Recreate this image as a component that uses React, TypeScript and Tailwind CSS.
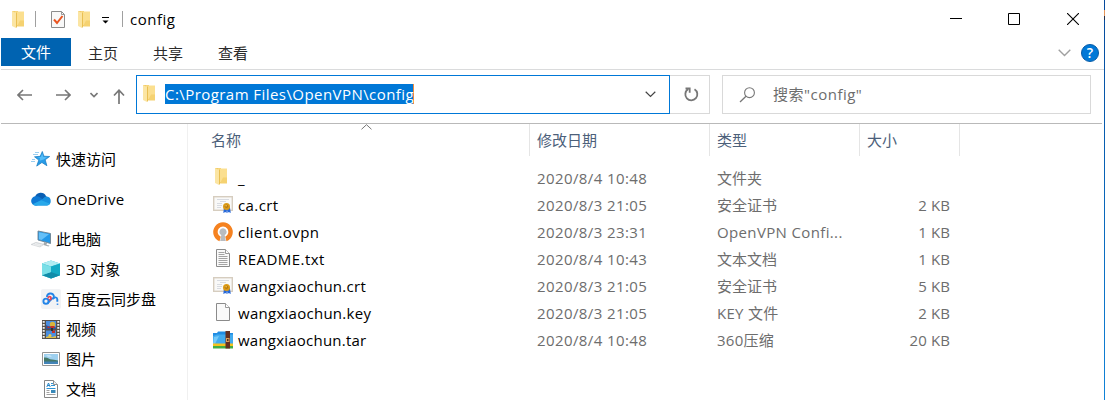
import React from "react";

type FileRow = {
  name: string;
  nameClass: string;
  icon: React.ReactNode;
  date: string;
  kind: string;
  kindClass: string;
  size: string;
};

function Folder({ className = "" }: { className?: string }) {
  return (
    <svg width="12" height="17" viewBox="0 0 12 17" className={"shrink-0 " + className}>
      <path d="M0 0h6v15H0z" fill="#f2cc68" />
      <path d="M3 .5h9v13.500H3z" fill="#fbdf8f" />
      <path d="M8 9.500h4V15.500H5z" fill="#f5d271" />
      <path d="M0 0l4 2v15l-4-2z" fill="#fbe5a3" />
      <path d="M4 2l1-1v15l-1 1z" fill="#e9bf52" />
    </svg>
  );
}

function Certificate() {
  return (
    <svg width="20" height="19" viewBox="0 0 20 19">
      <rect x=".7" y="1.700" width="18.600" height="13.600" fill="#f9f9f8" stroke="#d6cdbf" strokeWidth="1.400" />
      <path d="M4 4.500h12M7 6.500h6M4 8.500h5M4 10.500h5M4 12.500h4" stroke="#cfd3da" strokeWidth=".8" />
      <path d="M11 12l-.7 6 2-1 1.300 1 .4-4 .5 4 1.300-1 2 1-.9-6z" fill="#2668d8" />
      <circle cx="13.500" cy="11.500" r="3.500" fill="#dc9b16" />
      <circle cx="13.500" cy="11.300" r="1.700" fill="#b57812" />
      <circle cx="13.100" cy="10.800" r=".8" fill="#f7cd55" />
    </svg>
  );
}

function OpenVpn() {
  return (
    <svg width="20" height="20" viewBox="0 0 20 20">
      <path d="M6.500 19.200A9.800 9.800 0 1 1 13.500 19.200L12.200 14.700A5.300 5.300 0 1 0 7.800 14.700z" fill="#f58220" />
      <path d="M10 6.300a3.500 3.500 0 0 0-1.700 6.600L7.200 19h5.600l-1.100-6.100A3.500 3.500 0 0 0 10 6.300z" fill="#b9bcc0" />
    </svg>
  );
}

function Page({ lines = false }: { lines?: boolean }) {
  return (
    <svg width="16" height="19" viewBox="0 0 16 19">
      <path d="M1.500.5h9l4 4v13h-13z" fill="#fafafa" stroke="#8b8b8b" />
      <path d="M10.500.5v4h4" fill="#fff" stroke="#9a9a9a" />
      {lines && <path d="M3.500 3.500h6M3.500 5.500h6M3.500 7.500h9M3.500 9.500h9M3.500 11.500h9M3.500 13.500h9M3.500 15.500h9" stroke="#a4a4a4" />}
    </svg>
  );
}

function Archive() {
  return (
    <svg width="20" height="18" viewBox="0 0 20 18">
      <path d="M0 2h4l1-1.500h9L15 2h5v11H0z" fill="#218de3" />
      <path d="M0 5l4-1.500h16V13H0z" fill="#42abef" />
      <path d="M1 6l5-1-4 8H0z" fill="#74cafa" />
      <path d="M0 12.500h20V15H0z" fill="#f6c11d" />
      <path d="M0 15h20v2.500H0z" fill="#43ad45" />
      <path d="M12.500 0h4.500v17.500h-4.500z" fill="#632f21" />
      <path d="M13 7h3.500v4H13z" fill="#dfa15c" />
      <path d="M14 8h1.500v2H14z" fill="#56301f" />
    </svg>
  );
}

function Star() {
  return (
    <svg width="20" height="16" viewBox="0 0 20 16">
      <path d="M11.300.5l1.600 4.700 5.800.3-4.500 3.300 1.700 5.900-5-3.200-5.200 3.600 2.100-6L3.500 5.800l5.700-.5z" fill="#279ce8" stroke="#1478bf" strokeWidth=".7" />
      <path d="M11.200 2.300l1.100 3.700 3.900.3-3.600 2.200-4 1.200L9 7 6 6.300l3.900-.4z" fill="#55bdf8" />
      <path d="M4 1.500h4M2 3.500h5M1 8.500h3M0 10.500h4" stroke="#8fc8ee" strokeWidth=".9" />
    </svg>
  );
}

function OneDrive() {
  return (
    <svg width="20" height="14" viewBox="0 0 20 14">
      <path d="M4 5A6 6 0 0 1 15 4l2 3-8 3z" fill="#0a5fb4" />
      <path d="M5 4.300a4.600 4.600 0 0 1 3.500.8L14 9l-8 4.500H4.500A4.600 4.600 0 1 1 5 4.300z" fill="#0f78d4" />
      <path d="M14 4.700a4 4 0 0 1 1.800-.1A4.500 4.500 0 0 1 16 13.500H4.500L2 12.800 11.500 7z" fill="#1890df" />
      <path d="M1.500 12.200L10.300 8.200l8.700 3.500a4 4 0 0 1-3 1.800H4.500a4.700 4.700 0 0 1-3-1.300z" fill="#28a8ea" />
    </svg>
  );
}

function Computer() {
  return (
    <svg width="20" height="18" viewBox="0 0 20 18">
      <path d="M7 1l12.500 2.500v10L7 10z" fill="#2498e8" stroke="#6f8290" strokeWidth=".9" />
      <path d="M8 2.200l10 2-7.500 5.800-2.500-.8z" fill="#65c0f8" />
      <path d="M13 12l3 1-.5 2 3 .5-1 1-5-1.500z" fill="#a3a9ad" />
      <path d="M0 14.500l5-2.200 8 2L9 17z" fill="#dcdfe1" stroke="#c2c7cb" strokeWidth=".5" />
      <path d="M2 14.500l7 1.500M4 13.500l7 1.500" stroke="#fff" strokeWidth=".5" />
    </svg>
  );
}

function Cube() {
  return (
    <svg width="20" height="19" viewBox="0 0 20 19">
      <path d="M1 3.500L10 .5l9 3v11.800L10 18.500 1 15.300z" fill="#31c1d4" />
      <path d="M1 3.500L10 .5l9 3-9 3z" fill="#b1edf2" />
      <path d="M1 3.500l9 3v12L1 15.300z" fill="#69d6e0" />
      <path d="M10 6.500l9-3v11.800l-9 3.200z" fill="#13aac4" />
      <path d="M1 15.300l9-3.300v6.500zM19 15.300L10 12v6.500z" fill="#118ca9" />
      <path d="M1 4l9 3v5l-9 3z" fill="#79dfe7" />
    </svg>
  );
}

function CloudSync() {
  return (
    <svg width="20" height="20" viewBox="0 0 20 20">
      <rect width="20" height="20" rx="2" fill="#f2f3f5" />
      <circle cx="5" cy="12.200" r="2.600" fill="none" stroke="#2485e8" strokeWidth="1.900" />
      <path d="M6.800 13.800l5-5" stroke="#2485e8" strokeWidth="1.900" />
      <path d="M6 8a3.500 3.500 0 0 1 6.800-1.200c.5 1.600 0 2.500-1 3.200" fill="none" stroke="#2485e8" strokeWidth="1.900" />
      <path d="M7 9.500c0-2.200 3-2.500 3-.4 0 1.200-1 1.900-2 1.900" fill="none" stroke="#e84455" strokeWidth="1.700" />
      <path d="M12.300 9.500c.8-1.700 4-1.500 4 .8v2.400" fill="none" stroke="#2485e8" strokeWidth="1.900" />
      <path d="M15.700 14.500h1.600V16h-1.600z" fill="#3d92ec" />
    </svg>
  );
}

function Film() {
  return (
    <svg width="18" height="19" viewBox="0 0 18 19">
      <path d="M0 0h18v19H0z" fill="#55504b" />
      <path d="M1.700 1v18M16.300 1v18" stroke="#f1f1f1" strokeWidth="2" strokeDasharray="1.700 1.300" />
      <path d="M4 1h10v8H4zM4 10.500h10V18H4z" fill="#4a8ee0" />
      <path d="M4 5l3 1.500 2-1 5 2V9H4z" fill="#30549b" />
      <circle cx="10.500" cy="4.500" r="2.700" fill="#d8b43c" />
      <path d="M8.500 6h4v2h-4zM5.500 6.500h2V8h-2zM10 10.500h3V13h-3z" fill="#c72f26" />
      <circle cx="8" cy="15.500" r="1.500" fill="#edc846" />
      <path d="M4 17l3-1 3 1 4-1v2H4z" fill="#e2c046" />
      <path d="M9 8h2v3H9z" fill="#2f3030" />
    </svg>
  );
}

function Picture() {
  return (
    <svg width="18" height="14" viewBox="0 0 18 14">
      <path d="M.5.5h17v13H.5z" fill="#fff" stroke="#949494" />
      <path d="M2 2h14v10H2z" fill="#9ed0ef" />
      <path d="M2 5.500c4-.5 5 2 8 2s4 1 6 1v1.500H2z" fill="#447767" />
      <path d="M2 9.500h14V12H2z" fill="#4384b8" />
      <path d="M4 3.500h4l2 1H6z" fill="#e4f4fc" />
    </svg>
  );
}

function Doc() {
  return (
    <svg width="16" height="19" viewBox="0 0 16 19">
      <path d="M1.500.5h9l4 4v13h-13z" fill="#fff" stroke="#858585" />
      <path d="M10.500.5v4h4" fill="#eee" stroke="#929292" />
      <path d="M3.800 7l1.700-4 1.700 4M4.500 5.500h2" fill="none" stroke="#2384c8" />
      <path d="M8 3.500h2M8 5.500h4M3.500 8.500h9" stroke="#2f94d4" />
      <path d="M3.500 10.500h3M3.500 12.500h3M3.500 14.500h9" stroke="#a0a0a0" />
      <path d="M8 10h4.500v3H8z" fill="#3889b9" />
    </svg>
  );
}

const files: FileRow[] = [
  { name: "_", nameClass: "", icon: <Folder className="-ml-1 -mt-[3px]" />, date: "2020/8/4 10:48", kind: "文件夹", kindClass: "", size: "" },
  { name: "ca.crt", nameClass: "tracking-[0.4px]", icon: <Certificate />, date: "2020/8/3 21:05", kind: "安全证书", kindClass: "", size: "2 KB" },
  { name: "client.ovpn", nameClass: "tracking-[0.45px]", icon: <OpenVpn />, date: "2020/8/3 23:31", kind: "OpenVPN Confi...", kindClass: "tracking-[0.36px]", size: "1 KB" },
  { name: "README.txt", nameClass: "tracking-[0.45px]", icon: <Page lines />, date: "2020/8/4 10:43", kind: "文本文档", kindClass: "", size: "1 KB" },
  { name: "wangxiaochun.crt", nameClass: "tracking-[0.27px]", icon: <Certificate />, date: "2020/8/3 21:05", kind: "安全证书", kindClass: "", size: "5 KB" },
  { name: "wangxiaochun.key", nameClass: "tracking-[0.27px]", icon: <Page />, date: "2020/8/3 21:05", kind: "KEY 文件", kindClass: "tracking-[0.3px]", size: "2 KB" },
  { name: "wangxiaochun.tar", nameClass: "tracking-[0.22px]", icon: <Archive />, date: "2020/8/4 10:48", kind: "360压缩", kindClass: "tracking-[0.25px]", size: "20 KB" },
];

const children = [
  { label: "3D 对象", icon: <Cube />, labelClass: "tracking-[0.2px]" },
  { label: "百度云同步盘", icon: <CloudSync />, labelClass: "" },
  { label: "视频", icon: <Film />, labelClass: "" },
  { label: "图片", icon: <Picture />, labelClass: "" },
  { label: "文档", icon: <Doc />, labelClass: "" },
];

const roots = [
  { label: "快速访问", icon: <Star />, labelClass: "" },
  { label: "OneDrive", icon: <OneDrive />, labelClass: "tracking-[0.3px]" },
  { label: "此电脑", icon: <Computer />, labelClass: "" },
];

export default function App() {
  return (
    <div className="flex h-[400px] w-[1105px] overflow-hidden bg-white font-['Open_Sans','Noto_Sans_CJK_SC',sans-serif] text-[15px] leading-5 text-black">
      <div className="flex w-[1104px] shrink-0 flex-col pl-px">
        <header className="flex h-[38px] shrink-0 items-center">
          <Folder className="ml-[11px]" />
          <i className="ml-[11px] h-4 w-px bg-[#a0a0a0]" />
          <svg width="16" height="19" viewBox="0 0 16 19" className="ml-[14px]">
            <path d="M1.500 1.500h10l3 3v13h-13z" fill="#f8f8f8" stroke="#8c8c8c" />
            <path d="M11.500 1.500v3h3" fill="none" stroke="#999" />
            <path d="M4 9.500l3 3.500 5.500-7" fill="none" stroke="#e95420" strokeWidth="2" />
          </svg>
          <Folder className="ml-3" />
          <svg width="7" height="8" viewBox="0 0 7 8" className="ml-3 mt-1">
            <path d="M0 .5h7" stroke="#000" />
            <path d="M.5 3.500h6l-3 3z" />
          </svg>
          <i className="ml-[13px] h-4 w-px bg-[#a0a0a0]" />
          <span className="ml-[7px] whitespace-nowrap tracking-[0.5px]">config</span>
          <div className="ml-auto flex items-center pr-[25px]">
            <svg width="12" height="12"><path d="M0 5.500h12" stroke="#000" /></svg>
            <svg width="12" height="12" className="ml-[46px]"><path d="M.5.5h11v11H.5z" fill="none" stroke="#000" /></svg>
            <svg width="12" height="12" className="ml-[47px]"><path d="M0 0l12 12M12 0L0 12" stroke="#000" strokeWidth="1.100" /></svg>
          </div>
        </header>

        <nav className="flex h-8 shrink-0 items-start border-b border-[#dadbdc] text-[#2b2b2b]">
          <span className="flex h-7 w-[70px] items-center justify-center bg-[#0063b1] text-white">文件</span>
          <span className="ml-[17px] mt-[5px]">主页</span>
          <span className="ml-[35px] mt-[5px]">共享</span>
          <span className="ml-[35px] mt-[5px]">查看</span>
          <div className="ml-auto mt-[6px] flex items-center pr-[5px]">
            <svg width="13" height="8" viewBox="0 0 13 8"><path d="M.7.700l5.800 5.800L12.300.700" fill="none" stroke="#a0a0a0" strokeWidth="1.400" /></svg>
            <span className="ml-[10px] flex h-[18px] w-[18px] items-center justify-center rounded-full border border-[#075ca8] bg-[#0078d7] text-[14px] font-semibold text-white">?</span>
          </div>
        </nav>

        <div className="flex h-[53px] shrink-0 pt-[5px]">
          <div className="flex h-[39px] w-[135px] items-center pl-4">
            <svg width="15" height="12" viewBox="0 0 15 12"><path d="M.8 6H15M6 1L1 6l5 5" fill="none" stroke="#777" strokeWidth="1.600" /></svg>
            <svg width="15" height="12" viewBox="0 0 15 12" className="ml-6"><path d="M0 6h14.200M9 1l5 5-5 5" fill="none" stroke="#777" strokeWidth="1.600" /></svg>
            <svg width="8" height="6" viewBox="0 0 8 6" className="ml-[19px]"><path d="M.500 1L4 4.500 7.500 1" fill="none" stroke="#777" strokeWidth="1.600" /></svg>
            <svg width="12" height="15" viewBox="0 0 12 15" className="ml-[15px] mt-1"><path d="M6 1v14M1 6.500L6 1.200l5 5.300" fill="none" stroke="#777" strokeWidth="1.700" /></svg>
          </div>
          <div className="flex h-[39px] w-[534px] items-center border border-[#0078d7] pl-1.5 pr-[13px]">
            <Folder className="-mt-0.5" />
            <span className="-mt-px ml-2.5 flex h-5 w-[249px] items-center whitespace-nowrap border-r border-[#f08a3c] bg-[#0078d7] tracking-[0.44px] text-white">C:\Program Files\OpenVPN\config</span>
            <svg width="11" height="7" viewBox="0 0 11 7" className="ml-auto"><path d="M.700.800l4.800 4.700L10.300.800" fill="none" stroke="#444" strokeWidth="1.200" /></svg>
          </div>
          <div className="flex h-[39px] w-10 items-center justify-center border border-l-0 border-[#d9d9d9] pl-[3px]">
            <svg width="15" height="15" viewBox="0 0 15 15"><path d="M10.500 2.200A6 6 0 1 1 4 2.300M1.500 1.500h4.200v4.200" fill="none" stroke="#777" strokeWidth="1.800" /></svg>
          </div>
          <div className="ml-3 flex h-[39px] w-[369px] items-center border border-[#d9d9d9] pl-4 text-[#6d6d6d]">
            <svg width="18" height="16" viewBox="0 0 18 16"><circle cx="10.500" cy="5.700" r="4.900" fill="none" stroke="#777" strokeWidth="1.100" /><path d="M7 9.200L1 15" stroke="#777" strokeWidth="1.300" /></svg>
            <span className="-mt-px ml-4 tracking-[0.5px]">搜索"config"</span>
          </div>
        </div>

        <main className="mr-0.5 flex min-h-0 flex-1 border-t border-[#b9b9b9]">
          <aside className="flex w-[187px] shrink-0 flex-col border-r border-[#f0f0f0] pt-5">
            {roots.map((item) => (
              <div key={item.label} className="mb-2.5 flex h-[30px] shrink-0 items-center pl-[30px] [&:nth-child(3)]:mb-0">
                <span className="flex w-5 justify-center">{item.icon}</span>
                <span className={"ml-[5px] whitespace-nowrap " + item.labelClass}>{item.label}</span>
              </div>
            ))}
            {children.map((item) => (
              <div key={item.label} className="flex h-[30px] shrink-0 items-center pl-10">
                <span className="flex w-5 justify-center">{item.icon}</span>
                <span className={"ml-[5px] whitespace-nowrap " + item.labelClass}>{item.label}</span>
              </div>
            ))}
          </aside>
          <section className="relative w-[772px]">
            <svg width="11" height="6" viewBox="0 0 11 6" className="absolute left-[173px] top-0"><path d="M.500 5.300l5-4.600 5 4.600" fill="none" stroke="#777" /></svg>
            <div className="flex h-8 text-[#4c607a]">
              <span className="w-[342px] border-r border-[#e5e5e5] pl-[23px] pt-1.5">名称</span>
              <span className="w-[180px] border-r border-[#e5e5e5] pl-[7px] pt-1.5">修改日期</span>
              <span className="w-[150px] border-r border-[#e5e5e5] pl-[7px] pt-1.5">类型</span>
              <span className="w-[100px] border-r border-[#e5e5e5] pl-[7px] pt-1.5">大小</span>
            </div>
            <div className="pt-2 text-[#6d6d6d]">
              {files.map((file) => (
                <div key={file.name} className="flex h-[27px] items-center whitespace-nowrap">
                  <div className="flex w-[349px] items-center pl-[25px] text-black">
                    <span className="flex w-5 justify-center">{file.icon}</span>
                    <span className={"ml-[5px] " + file.nameClass}>{file.name}</span>
                  </div>
                  <span className="w-[180px] tracking-[0.4px]">{file.date}</span>
                  <span className={"w-[150px] " + file.kindClass}>{file.kind}</span>
                  <span className="w-[83px] text-right tracking-[0.1px]">{file.size}</span>
                </div>
              ))}
            </div>
          </section>
        </main>
      </div>
      <div className="flex w-px flex-col bg-linear-to-b from-[#064a9c] to-[#1083d8]">
        <i className="mt-2.5 h-1.5 bg-[#e5955a]" />
        <i className="h-1 bg-[#22304a]" />
      </div>
    </div>
  );
}
